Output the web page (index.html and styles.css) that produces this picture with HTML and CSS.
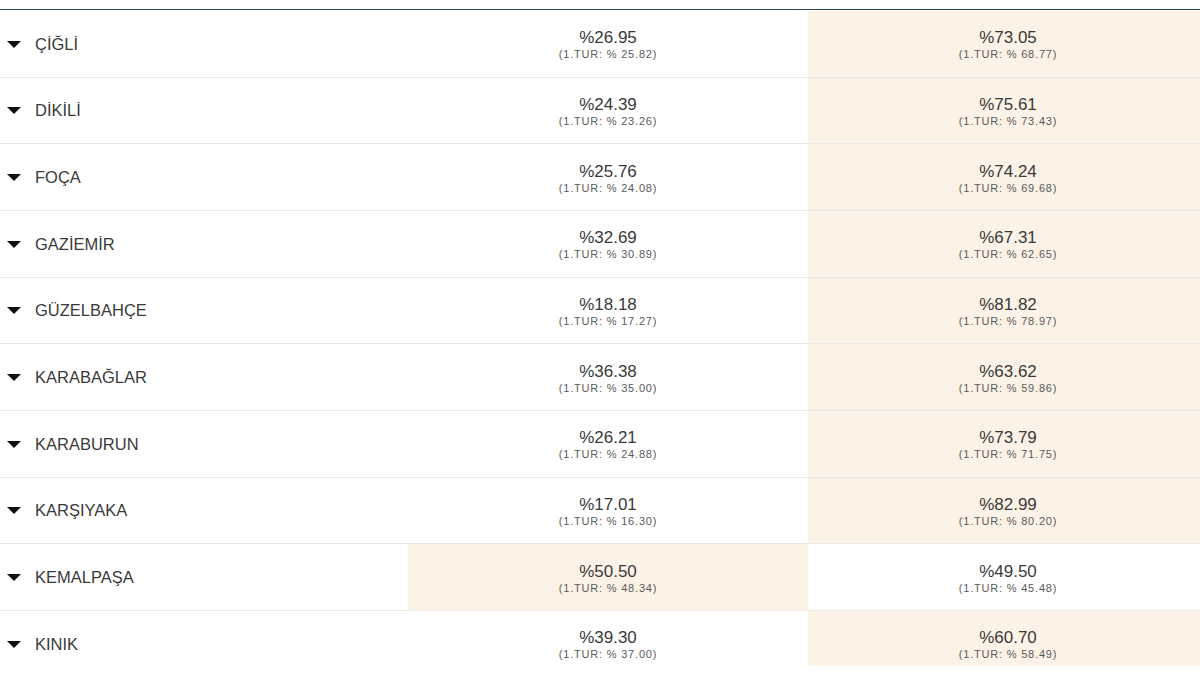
FILE: index.html
```html
<!DOCTYPE html>
<html lang="tr">
<head>
<meta charset="utf-8">
<link rel="stylesheet" href="styles.css">
</head>
<body>
<div class="topline"></div>
<div class="table">
  <div class="row"><div class="name"><span class="caret"></span>ÇİĞLİ</div><div class="cell"><div class="val">%26.95</div><div class="sub">(1.TUR: % 25.82)</div></div><div class="cell win"><div class="val">%73.05</div><div class="sub">(1.TUR: % 68.77)</div></div></div>
  <div class="row"><div class="name"><span class="caret"></span>DİKİLİ</div><div class="cell"><div class="val">%24.39</div><div class="sub">(1.TUR: % 23.26)</div></div><div class="cell win"><div class="val">%75.61</div><div class="sub">(1.TUR: % 73.43)</div></div></div>
  <div class="row"><div class="name"><span class="caret"></span>FOÇA</div><div class="cell"><div class="val">%25.76</div><div class="sub">(1.TUR: % 24.08)</div></div><div class="cell win"><div class="val">%74.24</div><div class="sub">(1.TUR: % 69.68)</div></div></div>
  <div class="row"><div class="name"><span class="caret"></span>GAZİEMİR</div><div class="cell"><div class="val">%32.69</div><div class="sub">(1.TUR: % 30.89)</div></div><div class="cell win"><div class="val">%67.31</div><div class="sub">(1.TUR: % 62.65)</div></div></div>
  <div class="row"><div class="name"><span class="caret"></span>GÜZELBAHÇE</div><div class="cell"><div class="val">%18.18</div><div class="sub">(1.TUR: % 17.27)</div></div><div class="cell win"><div class="val">%81.82</div><div class="sub">(1.TUR: % 78.97)</div></div></div>
  <div class="row"><div class="name"><span class="caret"></span>KARABAĞLAR</div><div class="cell"><div class="val">%36.38</div><div class="sub">(1.TUR: % 35.00)</div></div><div class="cell win"><div class="val">%63.62</div><div class="sub">(1.TUR: % 59.86)</div></div></div>
  <div class="row"><div class="name"><span class="caret"></span>KARABURUN</div><div class="cell"><div class="val">%26.21</div><div class="sub">(1.TUR: % 24.88)</div></div><div class="cell win"><div class="val">%73.79</div><div class="sub">(1.TUR: % 71.75)</div></div></div>
  <div class="row"><div class="name"><span class="caret"></span>KARŞIYAKA</div><div class="cell"><div class="val">%17.01</div><div class="sub">(1.TUR: % 16.30)</div></div><div class="cell win"><div class="val">%82.99</div><div class="sub">(1.TUR: % 80.20)</div></div></div>
  <div class="row"><div class="name"><span class="caret"></span>KEMALPAŞA</div><div class="cell win"><div class="val">%50.50</div><div class="sub">(1.TUR: % 48.34)</div></div><div class="cell"><div class="val">%49.50</div><div class="sub">(1.TUR: % 45.48)</div></div></div>
  <div class="row"><div class="name"><span class="caret"></span>KINIK</div><div class="cell"><div class="val">%39.30</div><div class="sub">(1.TUR: % 37.00)</div></div><div class="cell win"><div class="val">%60.70</div><div class="sub">(1.TUR: % 58.49)</div></div></div>
</div>
</body>
</html>
```
FILE: styles.css
```css
html, body {
  margin: 0;
  padding: 0;
  background: #ffffff;
}
body {
  width: 1200px;
  height: 675px;
  overflow: hidden;
  font-family: "Liberation Sans", Arial, sans-serif;
  color: #3a3a3a;
}
.topline {
  height: 1px;
  margin-top: 9px;
  background: #34444f;
}
.table {
  margin-top: 1px;
  height: 655px;
  overflow: hidden;
}
.row {
  display: grid;
  grid-template-columns: 408px 400px 400px;
  height: 66.67px;
  box-sizing: border-box;
  border-bottom: 1px solid #e9e9e9;
}
.name {
  display: flex;
  align-items: center;
  padding-left: 7px;
  padding-top: 1px;
  font-size: 16.5px;
  color: #3a3a3a;
}
.caret {
  width: 0;
  height: 0;
  border-left: 7.5px solid transparent;
  border-right: 7.5px solid transparent;
  border-top: 7px solid #111;
  margin-right: 14px;
}
.cell {
  display: flex;
  flex-direction: column;
  align-items: center;
  justify-content: center;
  padding-top: 2px;
}
.cell.win {
  background: #fcf2e6;
}
.val {
  font-size: 17px;
  line-height: 20px;
  color: #3a3a3a;
}
.sub {
  font-size: 11px;
  line-height: 13px;
  letter-spacing: 0.8px;
  color: #5a5a5a;
}
```
